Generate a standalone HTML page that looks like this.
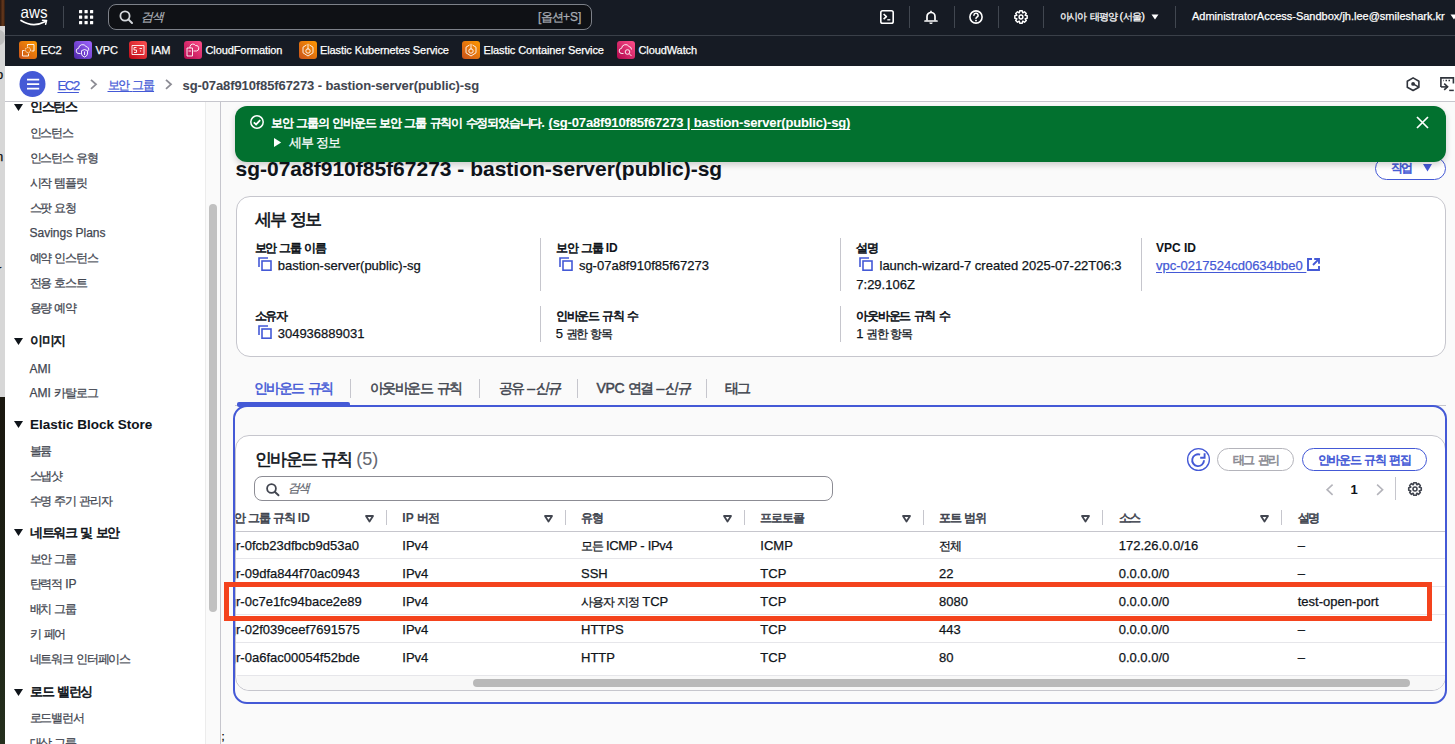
<!DOCTYPE html>
<html><head><meta charset="utf-8"><style>
*{box-sizing:border-box;margin:0;padding:0}
html,body{width:1455px;height:744px;overflow:hidden;background:#fafafa;font-family:"Liberation Sans",sans-serif;position:relative}
.a{position:absolute}
.t{position:absolute;white-space:nowrap;line-height:1;-webkit-text-stroke:0.25px currentColor}
.k{letter-spacing:-0.1em}
.k2{font-size:0.92em;letter-spacing:-0.1em}
.kb{font-weight:normal;-webkit-text-stroke:0.6px currentColor;letter-spacing:-0.1em}
.kb2{font-size:0.92em;font-weight:normal;-webkit-text-stroke:0.6px currentColor;letter-spacing:-0.1em}
svg{overflow:visible}
</style></head><body>
<div class="a" style="left:0px;top:0px;width:5px;height:26px;background:linear-gradient(90deg,#2a1810,#6a3a1c 60%,#2a1a12)"></div>
<div class="a" style="left:0px;top:26px;width:5px;height:371px;background:#d7d7d7"></div>
<div class="a" style="left:-6px;top:30px;width:11px;height:15px;background:#bdbdbd;border-radius:50%"></div>
<div class="t" style="left:-4px;top:68px;font-size:13px;color:#111">o</div>
<div class="t" style="left:-4px;top:150px;font-size:13px;color:#111">n</div>
<div class="t" style="left:-3px;top:263px;font-size:13px;color:#111">r</div>
<div class="a" style="left:0px;top:397px;width:5px;height:347px;background:linear-gradient(#1a170f,#1c2014 50%,#25301d)"></div>
<div class="a" style="left:5px;top:0px;width:1450px;height:66px;background:#161b24"></div>
<div class="a" style="left:5px;top:35px;width:1450px;height:1px;background:#3a4049"></div>
<svg class="a" style="left:20px;top:7px;" width="30" height="22" viewBox="0 0 30 22"><text x="0.5" y="10.6" font-family="Liberation Sans" font-size="16.5" fill="#fff" textLength="27" lengthAdjust="spacingAndGlyphs">aws</text><path d="M1 13.5 Q13 21 25.5 14.5" stroke="#fff" stroke-width="1.7" fill="none" stroke-linecap="round"/><path d="M22.5 13.2 L26.6 13.6 L25.6 17.3" stroke="#fff" stroke-width="1.5" fill="none" stroke-linecap="round" stroke-linejoin="round"/></svg>
<div class="a" style="left:63px;top:6px;width:1px;height:22px;background:#414750"></div>
<div class="a" style="left:909px;top:6px;width:1px;height:22px;background:#414750"></div>
<div class="a" style="left:954px;top:6px;width:1px;height:22px;background:#414750"></div>
<div class="a" style="left:998px;top:6px;width:1px;height:22px;background:#414750"></div>
<div class="a" style="left:1043px;top:6px;width:1px;height:22px;background:#414750"></div>
<div class="a" style="left:1175px;top:6px;width:1px;height:22px;background:#414750"></div>
<svg class="a" style="left:79px;top:10px;" width="14" height="14" viewBox="0 0 14 14"><rect x="0.0" y="0.0" width="3.2" height="3.2" rx="0.5" fill="#fff"/><rect x="0.0" y="5.5" width="3.2" height="3.2" rx="0.5" fill="#fff"/><rect x="0.0" y="11.0" width="3.2" height="3.2" rx="0.5" fill="#fff"/><rect x="5.5" y="0.0" width="3.2" height="3.2" rx="0.5" fill="#fff"/><rect x="5.5" y="5.5" width="3.2" height="3.2" rx="0.5" fill="#fff"/><rect x="5.5" y="11.0" width="3.2" height="3.2" rx="0.5" fill="#fff"/><rect x="11.0" y="0.0" width="3.2" height="3.2" rx="0.5" fill="#fff"/><rect x="11.0" y="5.5" width="3.2" height="3.2" rx="0.5" fill="#fff"/><rect x="11.0" y="11.0" width="3.2" height="3.2" rx="0.5" fill="#fff"/></svg>
<div class="a" style="left:108px;top:4px;width:484px;height:26px;background:#0f1115;border:1px solid #7d8189;border-radius:8px"></div>
<svg class="a" style="left:119px;top:10px;" width="14" height="14" viewBox="0 0 14 14"><circle cx="6" cy="6" r="4.6" stroke="#d5d8dc" stroke-width="1.8" fill="none"/><path d="M9.4 9.4 L13 13" stroke="#d5d8dc" stroke-width="2" stroke-linecap="round"/></svg>
<div class="t " style="left:141px;top:11px;font-size:12px;color:#a9adb4;font-style:italic"><span class="k">검색</span></div>
<div class="t " style="left:538px;top:10.5px;font-size:12px;color:#a9adb4;">[<span class="k">옵션</span>+S]</div>
<svg class="a" style="left:880px;top:10px;" width="14" height="14" viewBox="0 0 14 14"><rect x="0.8" y="0.8" width="12.4" height="12.4" rx="1.8" stroke="#fff" stroke-width="1.6" fill="none"/><path d="M3.6 4 L6.4 6.6 L3.6 9.2" stroke="#fff" stroke-width="1.6" fill="none" stroke-linejoin="round"/><path d="M7.3 9.8 H10.3" stroke="#fff" stroke-width="1.3"/></svg>
<svg class="a" style="left:924px;top:10px;" width="14" height="14" viewBox="0 0 14 14"><path d="M3 10.5 V6.5 A4 4 0 0 1 11 6.5 V10.5" stroke="#fff" stroke-width="1.7" fill="none"/><path d="M1 11 H13" stroke="#fff" stroke-width="1.7" stroke-linecap="round"/><path d="M5.3 12.6 A1.7 1.5 0 0 0 8.7 12.6 Z" fill="#fff"/><path d="M7 0.8 V2.5" stroke="#fff" stroke-width="1.6"/></svg>
<svg class="a" style="left:969px;top:10px;" width="14" height="14" viewBox="0 0 14 14"><circle cx="7" cy="7" r="6.1" stroke="#fff" stroke-width="1.6" fill="none"/><path d="M4.9 5.2 A2.1 2.1 0 1 1 7.6 7.3 Q7 7.6 7 8.6" stroke="#fff" stroke-width="1.5" fill="none" stroke-linecap="round"/><circle cx="7" cy="10.6" r="0.95" fill="#fff"/></svg>
<svg class="a" style="left:1014px;top:10px;" width="14" height="14" viewBox="0 0 14 14"><path d="M11.31 5.38 L13.17 5.75 L13.17 8.25 L11.31 8.62 L11.19 8.90 L12.25 10.48 L10.48 12.25 L8.90 11.19 L8.62 11.31 L8.25 13.17 L5.75 13.17 L5.38 11.31 L5.10 11.19 L3.52 12.25 L1.75 10.48 L2.81 8.90 L2.69 8.62 L0.83 8.25 L0.83 5.75 L2.69 5.38 L2.81 5.10 L1.75 3.52 L3.52 1.75 L5.10 2.81 L5.38 2.69 L5.75 0.83 L8.25 0.83 L8.62 2.69 L8.90 2.81 L10.48 1.75 L12.25 3.52 L11.19 5.10 Z" stroke="#fff" stroke-width="1.5" fill="none" stroke-linejoin="round"/><circle cx="7" cy="7" r="1.9" stroke="#fff" stroke-width="1.5" fill="none"/></svg>
<div class="t " style="left:1059.5px;top:10.8px;font-size:11px;color:#fff;"><span class="k2">아시아</span> <span class="k2">태평양</span> (<span class="k2">서울</span>)</div>
<svg class="a" style="left:1151px;top:13.5px;" width="8" height="6" viewBox="0 0 8 6"><path d="M0.5 0.5 H7.5 L4 5.5 Z" fill="#fff"/></svg>
<div class="t " style="left:1192px;top:11.3px;font-size:11px;color:#fff;">AdministratorAccess-Sandbox/jh.lee@smileshark.kr</div>
<svg class="a" style="left:1450px;top:13.5px;" width="8" height="6" viewBox="0 0 8 6"><path d="M0.5 0.5 H7.5 L4 5.5 Z" fill="#fff"/></svg>
<div class="a" style="left:19px;top:41px;width:18px;height:18px;border-radius:3px;background:linear-gradient(45deg,#c8511b,#ff9900)"></div>
<svg class="a" style="left:19px;top:41px;" width="18" height="18" viewBox="0 0 18 18"><path d="M8.5 5.5 V3.5 H15 V10 H12.5" stroke="#fff" stroke-width="0.9" fill="none" stroke-linejoin="round"/><path d="M5.5 9.5 H3.5 V15 H9.5 V12.5" stroke="#fff" stroke-width="0.9" fill="none" stroke-linejoin="round"/><circle cx="9" cy="9" r="2.6" stroke="#fff" stroke-width="0.9" fill="none" stroke-linejoin="round" stroke-dasharray="1.2 0.6"/></svg>
<div class="a" style="left:74px;top:41px;width:18px;height:18px;border-radius:3px;background:linear-gradient(45deg,#4d27a8,#a166ff)"></div>
<svg class="a" style="left:74px;top:41px;" width="18" height="18" viewBox="0 0 18 18"><path d="M6.5 12.5 H5 A2.6 2.6 0 0 1 4.6 7.3 A4 4 0 0 1 12 5.5 A3 3 0 0 1 14.5 9.5" stroke="#fff" stroke-width="0.9" fill="none" stroke-linejoin="round"/><path d="M10.5 8.5 L13.5 9.7 V13 Q12.8 15.5 10.5 16 Q8.2 15.5 7.5 13 V9.7 Z" stroke="#fff" stroke-width="0.9" fill="none" stroke-linejoin="round"/><path d="M10.5 10.5 V14" stroke="#fff" stroke-width="0.9" fill="none" stroke-linejoin="round"/></svg>
<div class="a" style="left:129px;top:41px;width:18px;height:18px;border-radius:3px;background:linear-gradient(45deg,#bd0816,#ff5252)"></div>
<svg class="a" style="left:129px;top:41px;" width="18" height="18" viewBox="0 0 18 18"><rect x="3" y="4.5" width="12" height="9" stroke="#fff" stroke-width="0.9" fill="none" stroke-linejoin="round"/><path d="M7.5 6.5 H5 V9 H7.5 V11.5 H5" stroke="#fff" stroke-width="0.9" fill="none" stroke-linejoin="round"/><path d="M10.5 7.5 H13 M11 10 H12" stroke="#fff" stroke-width="0.9" fill="none" stroke-linejoin="round"/></svg>
<div class="a" style="left:184px;top:41px;width:18px;height:18px;border-radius:3px;background:linear-gradient(45deg,#b0084d,#ff4f8b)"></div>
<svg class="a" style="left:184px;top:41px;" width="18" height="18" viewBox="0 0 18 18"><rect x="3" y="7" width="5.5" height="8" stroke="#fff" stroke-width="0.9" fill="none" stroke-linejoin="round"/><path d="M6 7 V5.5 A3 3 0 0 1 11.5 4.5 A2.6 2.6 0 0 1 12.5 10 H9.5" stroke="#fff" stroke-width="0.9" fill="none" stroke-linejoin="round"/><path d="M4.5 10 H7" stroke="#fff" stroke-width="0.9" fill="none" stroke-linejoin="round"/></svg>
<div class="a" style="left:299px;top:41px;width:18px;height:18px;border-radius:3px;background:linear-gradient(45deg,#c8511b,#ff9900)"></div>
<svg class="a" style="left:299px;top:41px;" width="18" height="18" viewBox="0 0 18 18"><path d="M7.5 4 L4 6.2 V11.8 L9 15 L14 11.8 V6.2 L10.5 4" stroke="#fff" stroke-width="0.9" fill="none" stroke-linejoin="round"/><path d="M9 2.8 V8.5" stroke="#fff" stroke-width="0.9" fill="none" stroke-linejoin="round"/><circle cx="9" cy="10" r="2.2" stroke="#fff" stroke-width="0.9" fill="none" stroke-linejoin="round"/></svg>
<div class="a" style="left:462px;top:41px;width:18px;height:18px;border-radius:3px;background:linear-gradient(45deg,#c8511b,#ff9900)"></div>
<svg class="a" style="left:462px;top:41px;" width="18" height="18" viewBox="0 0 18 18"><path d="M7.5 4 L4 6.2 V11.8 L9 15 L14 11.8 V6.2 L10.5 4" stroke="#fff" stroke-width="0.9" fill="none" stroke-linejoin="round"/><path d="M9 2.8 V8.5" stroke="#fff" stroke-width="0.9" fill="none" stroke-linejoin="round"/><circle cx="9" cy="10" r="2.2" stroke="#fff" stroke-width="0.9" fill="none" stroke-linejoin="round"/></svg>
<div class="a" style="left:617px;top:41px;width:18px;height:18px;border-radius:3px;background:linear-gradient(45deg,#b0084d,#ff4f8b)"></div>
<svg class="a" style="left:617px;top:41px;" width="18" height="18" viewBox="0 0 18 18"><path d="M6.5 12.5 H5 A2.6 2.6 0 0 1 4.6 7.3 A4 4 0 0 1 12 5.5 A3 3 0 0 1 14.5 8.5" stroke="#fff" stroke-width="0.9" fill="none" stroke-linejoin="round"/><circle cx="10.5" cy="11" r="2.3" stroke="#fff" stroke-width="0.9" fill="none" stroke-linejoin="round"/><path d="M12.2 12.7 L14.5 15" stroke="#fff" stroke-width="0.9" fill="none" stroke-linejoin="round"/></svg>
<div class="t " style="left:40.5px;top:44.6px;font-size:11px;color:#fff;letter-spacing:-0.1px">EC2</div>
<div class="t " style="left:95.5px;top:44.6px;font-size:11px;color:#fff;letter-spacing:-0.1px">VPC</div>
<div class="t " style="left:151px;top:44.6px;font-size:11px;color:#fff;letter-spacing:-0.1px">IAM</div>
<div class="t " style="left:205.5px;top:44.6px;font-size:11px;color:#fff;letter-spacing:-0.1px">CloudFormation</div>
<div class="t " style="left:320px;top:44.6px;font-size:11px;color:#fff;letter-spacing:-0.1px">Elastic Kubernetes Service</div>
<div class="t " style="left:483.5px;top:44.6px;font-size:11px;color:#fff;letter-spacing:-0.1px">Elastic Container Service</div>
<div class="t " style="left:638.5px;top:44.6px;font-size:11px;color:#fff;letter-spacing:-0.1px">CloudWatch</div>
<div class="a" style="left:5px;top:66px;width:1450px;height:36px;background:#fff;border-bottom:1px solid #c6c6cd"></div>
<svg class="a" style="left:19px;top:71px;" width="27" height="26" viewBox="0 0 27 26"><circle cx="13.5" cy="13" r="13" fill="#4459d6"/><path d="M8 8.6 H20.2 M8 13.1 H20.2 M8 17.6 H20.2" stroke="#fff" stroke-width="1.8"/></svg>
<div class="t " style="left:57.5px;top:78.5px;font-size:13px;color:#4459d6;letter-spacing:-1.3px;text-decoration:underline;text-underline-offset:2px">EC2</div>
<svg class="a" style="left:90px;top:79px;" width="8" height="11" viewBox="0 0 8 11"><path d="M1 0.8 L6 5.3 L1 9.8" stroke="#8c8c94" stroke-width="1.8" fill="none"/></svg>
<div class="t " style="left:107.5px;top:79px;font-size:12px;color:#4459d6;text-decoration:underline;text-underline-offset:2px"><span class="k">보안</span> <span class="k">그룹</span></div>
<svg class="a" style="left:165px;top:79px;" width="8" height="11" viewBox="0 0 8 11"><path d="M1 0.8 L6 5.3 L1 9.8" stroke="#8c8c94" stroke-width="1.8" fill="none"/></svg>
<div class="t " style="left:182.5px;top:79px;font-size:13px;color:#424650;font-weight:bold;-webkit-text-stroke:0.05px currentColor;letter-spacing:-0.1px">sg-07a8f910f85f67273 - bastion-server(public)-sg</div>
<svg class="a" style="left:1400px;top:70px;" width="55" height="25" viewBox="0 0 55 25"><path d="M13.1 7.9 L18.9 11.2 V17.2 L13.1 20.5 L7.3 17.2 V11.2 Z" stroke="#30343c" stroke-width="1.6" fill="none" stroke-linejoin="round"/><circle cx="13.1" cy="13.9" r="1.9" fill="#30343c"/><path d="M13.1 13.9 L18.4 16.9" stroke="#30343c" stroke-width="1.6"/><path d="M40.9 16.9 V7.9 H53.4 V13.4" stroke="#30343c" stroke-width="1.6" fill="none"/><path d="M40.9 16.9 H47.6" stroke="#30343c" stroke-width="1.6"/><path d="M44.2 13.6 L47.6 16.7 L44.2 19.9" stroke="#30343c" stroke-width="1.6" fill="none"/><path d="M49.2 20.4 H53.8" stroke="#30343c" stroke-width="1.5"/><path d="M43.2 10.5 H43.8 M45.5 10.5 H47 M48.5 10.5 H50" stroke="#30343c" stroke-width="1.3"/></svg>
<div class="a" style="left:0;top:0;width:1455px;height:744px;clip-path:inset(102px 0 0 0)">
<div class="a" style="left:5px;top:102px;width:216px;height:642px;background:#fff"></div>
<div class="a" style="left:205px;top:102px;width:15px;height:642px;background:#fafafa;border-left:1px solid #ececec"></div>
<div class="a" style="left:220px;top:102px;width:1px;height:642px;background:#c6c6cd"></div>
<div class="a" style="left:209px;top:204px;width:8px;height:408px;background:#c1c1c1;border-radius:4px"></div>
<svg class="a" style="left:13.8px;top:103.5px;" width="9" height="7" viewBox="0 0 9 7"><path d="M0 0 H9 L4.5 7 Z" fill="#0f141a"/></svg>
<div class="t " style="left:30px;top:100px;font-size:13px;color:#0f141a;font-weight:bold;-webkit-text-stroke:0.05px currentColor;"><span class="kb">인스턴스</span></div>
<div class="t " style="left:29.5px;top:127.2px;font-size:12px;color:#424650;"><span class="k">인스턴스</span></div>
<div class="t " style="left:29.5px;top:152.15px;font-size:12px;color:#424650;"><span class="k">인스턴스</span> <span class="k">유형</span></div>
<div class="t " style="left:29.5px;top:177.1px;font-size:12px;color:#424650;"><span class="k">시작</span> <span class="k">템플릿</span></div>
<div class="t " style="left:29.5px;top:202.05px;font-size:12px;color:#424650;"><span class="k">스팟</span> <span class="k">요청</span></div>
<div class="t " style="left:29.5px;top:227.0px;font-size:12px;color:#424650;">Savings Plans</div>
<div class="t " style="left:29.5px;top:251.95px;font-size:12px;color:#424650;"><span class="k">예약</span> <span class="k">인스턴스</span></div>
<div class="t " style="left:29.5px;top:276.9px;font-size:12px;color:#424650;"><span class="k">전용</span> <span class="k">호스트</span></div>
<div class="t " style="left:29.5px;top:301.85px;font-size:12px;color:#424650;"><span class="k">용량</span> <span class="k">예약</span></div>
<svg class="a" style="left:13.8px;top:337.8px;" width="9" height="7" viewBox="0 0 9 7"><path d="M0 0 H9 L4.5 7 Z" fill="#0f141a"/></svg>
<div class="t " style="left:30px;top:334.3px;font-size:13px;color:#0f141a;font-weight:bold;-webkit-text-stroke:0.05px currentColor;"><span class="kb">이미지</span></div>
<div class="t " style="left:29.5px;top:362.5px;font-size:12px;color:#424650;">AMI</div>
<div class="t " style="left:29.5px;top:386.8px;font-size:12px;color:#424650;">AMI <span class="k">카탈로그</span></div>
<svg class="a" style="left:13.8px;top:421.1px;" width="9" height="7" viewBox="0 0 9 7"><path d="M0 0 H9 L4.5 7 Z" fill="#0f141a"/></svg>
<div class="t " style="left:30px;top:417.6px;font-size:13.5px;color:#0f141a;font-weight:bold;-webkit-text-stroke:0.05px currentColor;">Elastic Block Store</div>
<div class="t " style="left:29.5px;top:444.5px;font-size:12px;color:#424650;"><span class="k">볼륨</span></div>
<div class="t " style="left:29.5px;top:469.5px;font-size:12px;color:#424650;"><span class="k">스냅샷</span></div>
<div class="t " style="left:29.5px;top:494.5px;font-size:12px;color:#424650;"><span class="k">수명</span> <span class="k">주기</span> <span class="k">관리자</span></div>
<svg class="a" style="left:13.8px;top:529.0px;" width="9" height="7" viewBox="0 0 9 7"><path d="M0 0 H9 L4.5 7 Z" fill="#0f141a"/></svg>
<div class="t " style="left:30px;top:525.5px;font-size:13px;color:#0f141a;font-weight:bold;-webkit-text-stroke:0.05px currentColor;"><span class="kb">네트워크</span> <span class="kb">및</span> <span class="kb">보안</span></div>
<div class="t " style="left:29.5px;top:552.5px;font-size:12px;color:#424650;"><span class="k">보안</span> <span class="k">그룹</span></div>
<div class="t " style="left:29.5px;top:577.5px;font-size:12px;color:#424650;"><span class="k">탄력적</span> IP</div>
<div class="t " style="left:29.5px;top:602.5px;font-size:12px;color:#424650;"><span class="k">배치</span> <span class="k">그룹</span></div>
<div class="t " style="left:29.5px;top:627.5px;font-size:12px;color:#424650;"><span class="k">키</span> <span class="k">페어</span></div>
<div class="t " style="left:29.5px;top:652.5px;font-size:12px;color:#424650;"><span class="k">네트워크</span> <span class="k">인터페이스</span></div>
<svg class="a" style="left:13.8px;top:688.5px;" width="9" height="7" viewBox="0 0 9 7"><path d="M0 0 H9 L4.5 7 Z" fill="#0f141a"/></svg>
<div class="t " style="left:30px;top:685px;font-size:13px;color:#0f141a;font-weight:bold;-webkit-text-stroke:0.05px currentColor;"><span class="kb">로드</span> <span class="kb">밸런싱</span></div>
<div class="t " style="left:29.5px;top:711.5px;font-size:12px;color:#424650;"><span class="k">로드밸런서</span></div>
<div class="t " style="left:29.5px;top:736.5px;font-size:12px;color:#424650;"><span class="k">대상</span> <span class="k">그룹</span></div>
</div>
<div class="t" style="left:221.5px;top:731px;font-size:11px;color:#000">;</div>
<div class="t " style="left:235.5px;top:158.2px;font-size:21px;color:#0f141a;font-weight:bold;-webkit-text-stroke:0.05px currentColor;">sg-07a8f910f85f67273 - bastion-server(public)-sg</div>
<div class="a" style="left:1375px;top:156.6px;width:71px;height:23px;background:#fff;border:1.5px solid #4459d6;border-radius:12px"></div>
<div class="t " style="left:1390.5px;top:162.3px;font-size:12px;color:#4459d6;font-weight:bold;-webkit-text-stroke:0.05px currentColor;"><span class="kb">작업</span></div>
<svg class="a" style="left:1423px;top:164.4px;" width="9" height="7.5" viewBox="0 0 9 7.5"><path d="M0 0 H9 L4.5 7.5 Z" fill="#4459d6"/></svg>
<div class="a" style="left:235px;top:106px;width:1211px;height:56px;background:#02712f;border-radius:12px;box-shadow:0 3px 6px rgba(0,0,0,0.18)"></div>
<svg class="a" style="left:250px;top:114.8px;" width="14" height="14" viewBox="0 0 14 14"><circle cx="7" cy="7" r="6.2" stroke="#fff" stroke-width="1.5" fill="none"/><path d="M3.8 7.3 L6.1 9.4 L10.2 5.2" stroke="#fff" stroke-width="1.8" fill="none"/></svg>
<div class="t " style="left:271px;top:116.3px;font-size:13px;color:#fff;font-weight:bold;-webkit-text-stroke:0.05px currentColor;"><span class="kb2">보안</span> <span class="kb2">그룹의</span> <span class="kb2">인바운드</span> <span class="kb2">보안</span> <span class="kb2">그룹</span> <span class="kb2">규칙이</span> <span class="kb2">수정되었습니다</span>. <u style="text-underline-offset:2px;letter-spacing:-0.15px">(sg-07a8f910f85f67273 | bastion-server(public)-sg)</u></div>
<svg class="a" style="left:273.8px;top:138.2px;" width="7.2" height="9.1" viewBox="0 0 7.2 9.1"><path d="M0 0 L7.2 4.55 L0 9.1 Z" fill="#fff"/></svg>
<div class="t " style="left:289px;top:136px;font-size:13px;color:#fff;"><span class="k">세부</span> <span class="k">정보</span></div>
<svg class="a" style="left:1416px;top:116px;" width="13" height="13" viewBox="0 0 13 13"><path d="M1 1 L12 12 M12 1 L1 12" stroke="#fff" stroke-width="1.7"/></svg>
<div class="a" style="left:235.5px;top:196px;width:1210.5px;height:160.5px;background:#fff;border:1px solid #c6c6cd;border-radius:14px"></div>
<div class="t " style="left:254.5px;top:211.4px;font-size:17px;color:#0f141a;font-weight:bold;-webkit-text-stroke:0.05px currentColor;"><span class="kb">세부</span> <span class="kb">정보</span></div>
<div class="a" style="left:540px;top:238px;width:1px;height:53px;background:#c6c6cd"></div>
<div class="a" style="left:840px;top:238px;width:1px;height:53px;background:#c6c6cd"></div>
<div class="a" style="left:1141px;top:238px;width:1px;height:53px;background:#c6c6cd"></div>
<div class="a" style="left:540px;top:306px;width:1px;height:36px;background:#c6c6cd"></div>
<div class="a" style="left:840px;top:306px;width:1px;height:36px;background:#c6c6cd"></div>
<div class="t " style="left:254.5px;top:242px;font-size:12px;color:#0f141a;font-weight:bold;-webkit-text-stroke:0.05px currentColor;"><span class="kb">보안</span> <span class="kb">그룹</span> <span class="kb">이름</span></div>
<svg class="a" style="left:258px;top:257.2px;" width="14" height="14" viewBox="0 0 14 14"><path d="M1 10 V1 H10" stroke="#4459d6" stroke-width="1.6" fill="none"/><rect x="4" y="4" width="9" height="9.2" stroke="#4459d6" stroke-width="1.6" fill="none"/></svg>
<div class="t " style="left:277.7px;top:259.1px;font-size:13px;color:#0f141a;">bastion-server(public)-sg</div>
<div class="t " style="left:555.8px;top:242px;font-size:12px;color:#0f141a;font-weight:bold;-webkit-text-stroke:0.05px currentColor;"><span class="kb">보안</span> <span class="kb">그룹</span> ID</div>
<svg class="a" style="left:559px;top:257.4px;" width="14" height="14" viewBox="0 0 14 14"><path d="M1 10 V1 H10" stroke="#4459d6" stroke-width="1.6" fill="none"/><rect x="4" y="4" width="9" height="9.2" stroke="#4459d6" stroke-width="1.6" fill="none"/></svg>
<div class="t " style="left:578.9px;top:259.1px;font-size:13px;color:#0f141a;">sg-07a8f910f85f67273</div>
<div class="t " style="left:856.3px;top:242px;font-size:12px;color:#0f141a;font-weight:bold;-webkit-text-stroke:0.05px currentColor;"><span class="kb">설명</span></div>
<svg class="a" style="left:858.8px;top:257.2px;" width="14" height="14" viewBox="0 0 14 14"><path d="M1 10 V1 H10" stroke="#4459d6" stroke-width="1.6" fill="none"/><rect x="4" y="4" width="9" height="9.2" stroke="#4459d6" stroke-width="1.6" fill="none"/></svg>
<div class="t " style="left:879.5px;top:259.1px;font-size:13px;color:#0f141a;">launch-wizard-7 created 2025-07-22T06:3</div>
<div class="t " style="left:856.3px;top:277.7px;font-size:13px;color:#0f141a;">7:29.106Z</div>
<div class="t " style="left:1156px;top:242px;font-size:12px;color:#0f141a;font-weight:bold;-webkit-text-stroke:0.05px currentColor;">VPC ID</div>
<div class="t " style="left:1156px;top:259.2px;font-size:13px;color:#4459d6;text-decoration:underline;text-underline-offset:2px">vpc-0217524cd0634bbe0&nbsp;</div>
<svg class="a" style="left:1307px;top:258px;" width="13" height="13" viewBox="0 0 13 13"><path d="M5 1 H1 V12 H12 V8" stroke="#4459d6" stroke-width="1.9" fill="none"/><path d="M7.2 1 H12 V5.8 M11.8 1.2 L6 7" stroke="#4459d6" stroke-width="1.9" fill="none"/></svg>
<div class="t " style="left:254.5px;top:309.5px;font-size:12px;color:#0f141a;font-weight:bold;-webkit-text-stroke:0.05px currentColor;"><span class="kb">소유자</span></div>
<svg class="a" style="left:258px;top:325.2px;" width="14" height="14" viewBox="0 0 14 14"><path d="M1 10 V1 H10" stroke="#4459d6" stroke-width="1.6" fill="none"/><rect x="4" y="4" width="9" height="9.2" stroke="#4459d6" stroke-width="1.6" fill="none"/></svg>
<div class="t " style="left:277.7px;top:327.1px;font-size:13px;color:#0f141a;">304936889031</div>
<div class="t " style="left:555.8px;top:309.5px;font-size:12px;color:#0f141a;font-weight:bold;-webkit-text-stroke:0.05px currentColor;"><span class="kb">인바운드</span> <span class="kb">규칙</span> <span class="kb">수</span></div>
<div class="t " style="left:555.8px;top:327.3px;font-size:13px;color:#0f141a;word-spacing:-1px">5 <span class="k2">권한</span> <span class="k2">항목</span></div>
<div class="t " style="left:856.3px;top:309.5px;font-size:12px;color:#0f141a;font-weight:bold;-webkit-text-stroke:0.05px currentColor;"><span class="kb">아웃바운드</span> <span class="kb">규칙</span> <span class="kb">수</span></div>
<div class="t " style="left:856.3px;top:327.3px;font-size:13px;color:#0f141a;word-spacing:-1px">1 <span class="k2">권한</span> <span class="k2">항목</span></div>
<div class="a" style="left:235px;top:405px;width:1211px;height:1px;background:#c6c6cd"></div>
<div class="t " style="left:253.5px;top:380.9px;font-size:14px;color:#4459d6;-webkit-text-stroke:0.5px currentColor"><span class="k">인바운드</span> <span class="k">규칙</span></div>
<div class="t " style="left:369.6px;top:380.9px;font-size:14px;color:#424650;-webkit-text-stroke:0.5px currentColor"><span class="k">아웃바운드</span> <span class="k">규칙</span></div>
<div class="t " style="left:498.5px;top:380.9px;font-size:14px;color:#424650;-webkit-text-stroke:0.5px currentColor;letter-spacing:-0.3px"><span class="k">공유</span> –<i><span class="k">신규</span></i></div>
<div class="t " style="left:596.5px;top:380.9px;font-size:14px;color:#424650;-webkit-text-stroke:0.5px currentColor;letter-spacing:-0.35px">VPC <span class="k">연결</span> –<i><span class="k">신규</span></i></div>
<div class="t " style="left:724.7px;top:380.9px;font-size:14px;color:#424650;-webkit-text-stroke:0.5px currentColor"><span class="k">태그</span></div>
<div class="a" style="left:350px;top:379px;width:1px;height:19px;background:#c6c6cd"></div>
<div class="a" style="left:479px;top:379px;width:1px;height:19px;background:#c6c6cd"></div>
<div class="a" style="left:577px;top:379px;width:1px;height:19px;background:#c6c6cd"></div>
<div class="a" style="left:706px;top:379px;width:1px;height:19px;background:#c6c6cd"></div>
<div class="a" style="left:234.5px;top:435px;width:1211.5px;height:255.5px;background:#fff;border:1px solid #c6c6cd;border-radius:14px;overflow:hidden"></div>
<div class="a" style="left:236.5px;top:675px;width:1208.5px;height:14.5px;background:#f8f8f8;border-top:1px solid #e6e6ea;border-radius:0 0 13px 13px"></div>
<div class="a" style="left:473px;top:679px;width:937px;height:8px;background:#b9b9b9;border-radius:4px"></div>
<div class="a" style="left:233px;top:405px;width:1214px;height:299px;border:2px solid #4459d6;border-radius:14px"></div>
<div class="a" style="left:236.6px;top:402.2px;width:113.5px;height:4.6px;background:#4459d6;border-radius:2px"></div>
<div class="t " style="left:255px;top:450.3px;font-size:17px;color:#0f141a;font-weight:bold;-webkit-text-stroke:0.05px currentColor;"><span class="kb">인바운드</span> <span class="kb">규칙</span> <span style="font-weight:normal;color:#656871;font-size:18px">(5)</span></div>
<svg class="a" style="left:1187px;top:447.8px;" width="23" height="23" viewBox="0 0 23 23"><circle cx="11.5" cy="11.5" r="10.9" stroke="#4459d6" stroke-width="1.3" fill="#fff"/><path d="M17 12.2 A5.9 5.9 0 1 1 13.1 6.66" stroke="#4459d6" stroke-width="1.9" fill="none"/><path d="M13.2 9.7 H17.6 V5.3" stroke="#4459d6" stroke-width="1.9" fill="none"/></svg>
<div class="a" style="left:1217.3px;top:447.8px;width:77px;height:23px;background:#fff;border:1px solid #b4b4bb;border-radius:12px"></div>
<div class="t " style="left:1232.7px;top:453.8px;font-size:12px;color:#8c8c94;font-weight:bold;-webkit-text-stroke:0.05px currentColor;"><span class="kb">태그</span> <span class="kb">관리</span></div>
<div class="a" style="left:1302px;top:447.8px;width:125px;height:23px;background:#fff;border:1.5px solid #4459d6;border-radius:12px"></div>
<div class="t " style="left:1317.5px;top:453.8px;font-size:12px;color:#4459d6;font-weight:bold;-webkit-text-stroke:0.05px currentColor;"><span class="kb">인바운드</span> <span class="kb">규칙</span> <span class="kb">편집</span></div>
<div class="a" style="left:254px;top:476px;width:579px;height:24.5px;background:#fff;border:1px solid #8c8c94;border-radius:8px"></div>
<svg class="a" style="left:265.5px;top:482.5px;" width="14" height="13" viewBox="0 0 14 13"><circle cx="5.5" cy="5.5" r="4.4" stroke="#424650" stroke-width="1.8" fill="none"/><path d="M8.7 8.7 L12.5 12.3" stroke="#424650" stroke-width="1.9" stroke-linecap="round"/></svg>
<div class="t " style="left:287.5px;top:481.5px;font-size:12px;color:#656871;font-style:italic"><span class="k">검색</span></div>
<svg class="a" style="left:1325.5px;top:483.5px;" width="8" height="11.5" viewBox="0 0 8 11.5"><path d="M6.6 0.7 L1.1 5.7 L6.6 10.8" stroke="#b4b4bb" stroke-width="1.6" fill="none"/></svg>
<div class="t " style="left:1350.5px;top:482.5px;font-size:13px;color:#0f141a;font-weight:bold;-webkit-text-stroke:0.05px currentColor;">1</div>
<svg class="a" style="left:1375.8px;top:483.5px;" width="8" height="11.5" viewBox="0 0 8 11.5"><path d="M1.1 0.7 L6.6 5.7 L1.1 10.8" stroke="#b4b4bb" stroke-width="1.6" fill="none"/></svg>
<div class="a" style="left:1395px;top:476.7px;width:1px;height:23.6px;background:#c6c6cd"></div>
<svg class="a" style="left:1408px;top:482.3px;" width="14" height="14" viewBox="0 0 14 14"><path d="M11.40 5.34 L13.27 5.73 L13.27 8.27 L11.40 8.66 L11.28 8.94 L12.33 10.54 L10.54 12.33 L8.94 11.28 L8.66 11.40 L8.27 13.27 L5.73 13.27 L5.34 11.40 L5.06 11.28 L3.46 12.33 L1.67 10.54 L2.72 8.94 L2.60 8.66 L0.73 8.27 L0.73 5.73 L2.60 5.34 L2.72 5.06 L1.67 3.46 L3.46 1.67 L5.06 2.72 L5.34 2.60 L5.73 0.73 L8.27 0.73 L8.66 2.60 L8.94 2.72 L10.54 1.67 L12.33 3.46 L11.28 5.06 Z" stroke="#424650" stroke-width="1.6" fill="none" stroke-linejoin="round"/><circle cx="7" cy="7" r="2" stroke="#424650" stroke-width="1.6" fill="none"/></svg>
<div class="a" style="left:0;top:0;width:1455px;height:744px;clip-path:inset(0 0 0 235.5px)">
<div class="t " style="left:223.0px;top:512.3px;font-size:12px;color:#424650;font-weight:bold;-webkit-text-stroke:0.05px currentColor;"><span class="kb">보안</span> <span class="kb">그룹</span> <span class="kb">규칙</span> ID</div>
<div class="t " style="left:402.3px;top:512.3px;font-size:12px;color:#424650;font-weight:bold;-webkit-text-stroke:0.05px currentColor;">IP <span class="kb">버전</span></div>
<div class="t " style="left:581px;top:512.3px;font-size:12px;color:#424650;font-weight:bold;-webkit-text-stroke:0.05px currentColor;"><span class="kb">유형</span></div>
<div class="t " style="left:760.3px;top:512.3px;font-size:12px;color:#424650;font-weight:bold;-webkit-text-stroke:0.05px currentColor;"><span class="kb">프로토콜</span></div>
<div class="t " style="left:939px;top:512.3px;font-size:12px;color:#424650;font-weight:bold;-webkit-text-stroke:0.05px currentColor;"><span class="kb">포트</span> <span class="kb">범위</span></div>
<div class="t " style="left:1118.7px;top:512.3px;font-size:12px;color:#424650;font-weight:bold;-webkit-text-stroke:0.05px currentColor;"><span class="kb">소스</span></div>
<div class="t " style="left:1297.7px;top:512.3px;font-size:12px;color:#424650;font-weight:bold;-webkit-text-stroke:0.05px currentColor;"><span class="kb">설명</span></div>
<div class="a" style="left:386.0px;top:510.3px;width:1px;height:15px;background:#c6c6cd"></div>
<svg class="a" style="left:365.0px;top:514.8px;" width="9" height="7.5" viewBox="0 0 9 7.5"><path d="M1 1 H8 L4.5 6.5 Z" stroke="#424650" stroke-width="1.8" fill="none" stroke-linejoin="round"/></svg>
<div class="a" style="left:565.0px;top:510.3px;width:1px;height:15px;background:#c6c6cd"></div>
<svg class="a" style="left:544.0px;top:514.8px;" width="9" height="7.5" viewBox="0 0 9 7.5"><path d="M1 1 H8 L4.5 6.5 Z" stroke="#424650" stroke-width="1.8" fill="none" stroke-linejoin="round"/></svg>
<div class="a" style="left:744.0px;top:510.3px;width:1px;height:15px;background:#c6c6cd"></div>
<svg class="a" style="left:723.0px;top:514.8px;" width="9" height="7.5" viewBox="0 0 9 7.5"><path d="M1 1 H8 L4.5 6.5 Z" stroke="#424650" stroke-width="1.8" fill="none" stroke-linejoin="round"/></svg>
<div class="a" style="left:923.0px;top:510.3px;width:1px;height:15px;background:#c6c6cd"></div>
<svg class="a" style="left:902.0px;top:514.8px;" width="9" height="7.5" viewBox="0 0 9 7.5"><path d="M1 1 H8 L4.5 6.5 Z" stroke="#424650" stroke-width="1.8" fill="none" stroke-linejoin="round"/></svg>
<div class="a" style="left:1102.0px;top:510.3px;width:1px;height:15px;background:#c6c6cd"></div>
<svg class="a" style="left:1081.0px;top:514.8px;" width="9" height="7.5" viewBox="0 0 9 7.5"><path d="M1 1 H8 L4.5 6.5 Z" stroke="#424650" stroke-width="1.8" fill="none" stroke-linejoin="round"/></svg>
<div class="a" style="left:1281.0px;top:510.3px;width:1px;height:15px;background:#c6c6cd"></div>
<svg class="a" style="left:1260.0px;top:514.8px;" width="9" height="7.5" viewBox="0 0 9 7.5"><path d="M1 1 H8 L4.5 6.5 Z" stroke="#424650" stroke-width="1.8" fill="none" stroke-linejoin="round"/></svg>
<div class="a" style="left:236px;top:531px;width:1209px;height:1px;background:#c6c6cd"></div>
<div class="t " style="left:222.3px;top:539.3px;font-size:13px;color:#0f141a;">sgr-0fcb23dfbcb9d53a0</div>
<div class="t " style="left:402.3px;top:539.3px;font-size:13px;color:#0f141a;">IPv4</div>
<div class="t " style="left:581px;top:539.3px;font-size:13px;color:#0f141a;letter-spacing:-0.3px"><span class="k2">모든</span> ICMP - IPv4</div>
<div class="t " style="left:760.3px;top:539.3px;font-size:13px;color:#0f141a;">ICMP</div>
<div class="t " style="left:939px;top:539.3px;font-size:13px;color:#0f141a;"><span class="k2">전체</span></div>
<div class="t " style="left:1118.7px;top:539.3px;font-size:13px;color:#0f141a;">172.26.0.0/16</div>
<div class="t " style="left:1297.7px;top:539.3px;font-size:13px;color:#0f141a;">–</div>
<div class="a" style="left:236px;top:557.6px;width:1209px;height:1px;background:#e6e6ea"></div>
<div class="t " style="left:222.3px;top:567.3px;font-size:13px;color:#0f141a;">sgr-09dfa844f70ac0943</div>
<div class="t " style="left:402.3px;top:567.3px;font-size:13px;color:#0f141a;">IPv4</div>
<div class="t " style="left:581px;top:567.3px;font-size:13px;color:#0f141a;">SSH</div>
<div class="t " style="left:760.3px;top:567.3px;font-size:13px;color:#0f141a;">TCP</div>
<div class="t " style="left:939px;top:567.3px;font-size:13px;color:#0f141a;">22</div>
<div class="t " style="left:1118.7px;top:567.3px;font-size:13px;color:#0f141a;">0.0.0.0/0</div>
<div class="t " style="left:1297.7px;top:567.3px;font-size:13px;color:#0f141a;">–</div>
<div class="a" style="left:236px;top:585.6px;width:1209px;height:1px;background:#e6e6ea"></div>
<div class="t " style="left:222.3px;top:595.3px;font-size:13px;color:#0f141a;">sgr-0c7e1fc94bace2e89</div>
<div class="t " style="left:402.3px;top:595.3px;font-size:13px;color:#0f141a;">IPv4</div>
<div class="t " style="left:581px;top:595.3px;font-size:13px;color:#0f141a;"><span class="k2">사용자</span> <span class="k2">지정</span> TCP</div>
<div class="t " style="left:760.3px;top:595.3px;font-size:13px;color:#0f141a;">TCP</div>
<div class="t " style="left:939px;top:595.3px;font-size:13px;color:#0f141a;">8080</div>
<div class="t " style="left:1118.7px;top:595.3px;font-size:13px;color:#0f141a;">0.0.0.0/0</div>
<div class="t " style="left:1297.7px;top:595.3px;font-size:13px;color:#0f141a;">test-open-port</div>
<div class="a" style="left:236px;top:613.6px;width:1209px;height:1px;background:#e6e6ea"></div>
<div class="t " style="left:222.3px;top:623.3px;font-size:13px;color:#0f141a;">sgr-02f039ceef7691575</div>
<div class="t " style="left:402.3px;top:623.3px;font-size:13px;color:#0f141a;">IPv4</div>
<div class="t " style="left:581px;top:623.3px;font-size:13px;color:#0f141a;">HTTPS</div>
<div class="t " style="left:760.3px;top:623.3px;font-size:13px;color:#0f141a;">TCP</div>
<div class="t " style="left:939px;top:623.3px;font-size:13px;color:#0f141a;">443</div>
<div class="t " style="left:1118.7px;top:623.3px;font-size:13px;color:#0f141a;">0.0.0.0/0</div>
<div class="t " style="left:1297.7px;top:623.3px;font-size:13px;color:#0f141a;">–</div>
<div class="a" style="left:236px;top:641.6px;width:1209px;height:1px;background:#e6e6ea"></div>
<div class="t " style="left:222.3px;top:651.3px;font-size:13px;color:#0f141a;">sgr-0a6fac00054f52bde</div>
<div class="t " style="left:402.3px;top:651.3px;font-size:13px;color:#0f141a;">IPv4</div>
<div class="t " style="left:581px;top:651.3px;font-size:13px;color:#0f141a;">HTTP</div>
<div class="t " style="left:760.3px;top:651.3px;font-size:13px;color:#0f141a;">TCP</div>
<div class="t " style="left:939px;top:651.3px;font-size:13px;color:#0f141a;">80</div>
<div class="t " style="left:1118.7px;top:651.3px;font-size:13px;color:#0f141a;">0.0.0.0/0</div>
<div class="t " style="left:1297.7px;top:651.3px;font-size:13px;color:#0f141a;">–</div>
</div>
<div class="a" style="left:224px;top:582px;width:1208px;height:39px;border:5px solid #f4431d"></div>
</body></html>
